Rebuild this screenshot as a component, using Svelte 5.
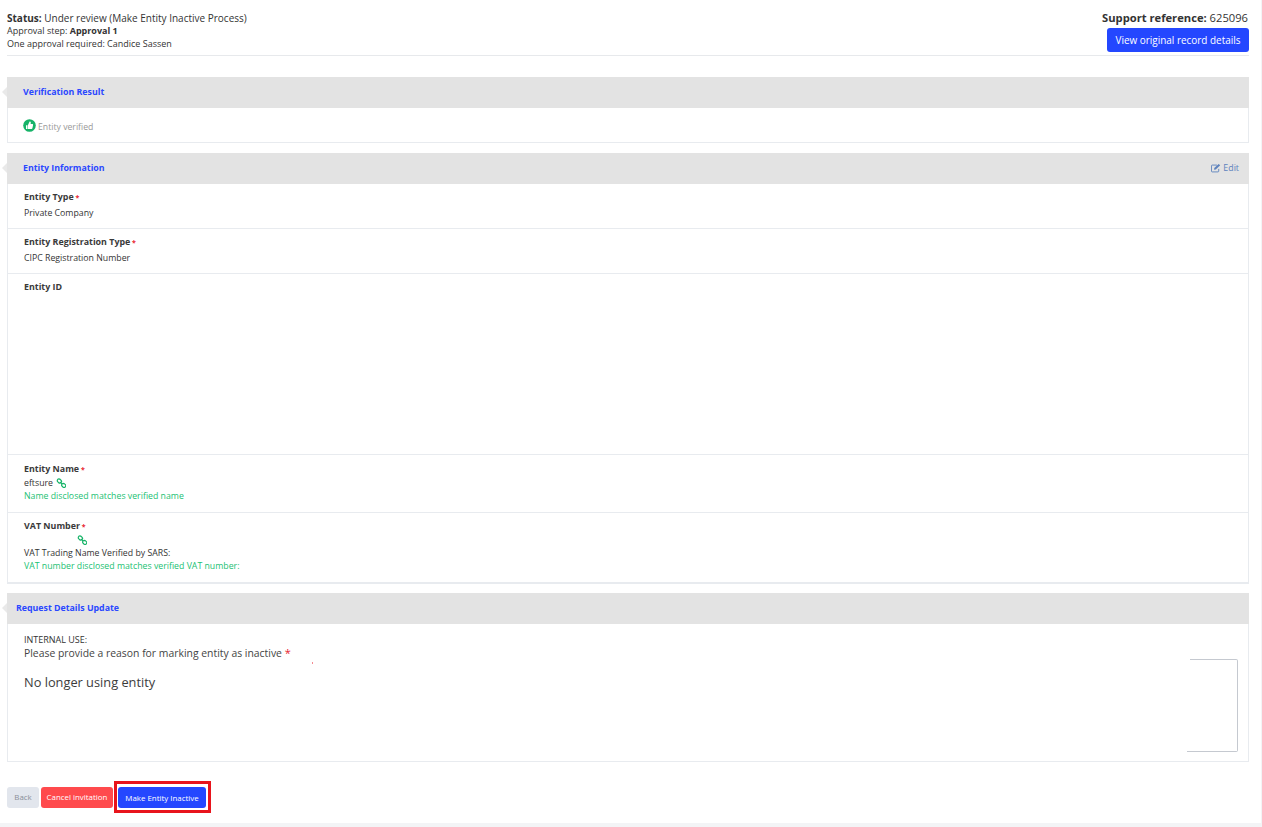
<script>
  const chain = 'M2.800 .9a1.900 1.900 0 0 1 1.500 .6l.8 .8a1.700 1.700 0 0 1 -2.400 2.400l-.8-.8A1.700 1.700 0 0 1 2.800 .9zM7.200 5.300a1.900 1.900 0 0 1 1.400 .6l.7 .7a1.700 1.700 0 0 1 -2.400 2.400l-.7-.7A1.700 1.700 0 0 1 7.200 5.300zM3.900 3.900l2.200 2.200';
</script>

<div class="page">
  <header class="top">
    <div class="status">
      <p class="s1"><b>Status:</b> Under review (Make Entity Inactive Process)</p>
      <p>Approval step: <b>Approval 1</b></p>
      <p>One approval required: Candice Sassen</p>
    </div>
    <div class="support">
      <p class="ref"><b>Support reference:</b> 625096</p>
      <button class="btn-view">View original record details</button>
    </div>
  </header>

  <section class="panel first">
    <h2 class="head"><span>Verification Result</span></h2>
    <div class="body verify">
      <svg class="thumb" width="13" height="13" viewBox="0 0 13 13" aria-hidden="true">
        <circle cx="6.500" cy="6.500" r="6.300" fill="#16b368"/>
        <path d="M3 6.200h1.500v3.800H3zM5 6.100 6.600 2.600c1 0 1.400 .7 1.200 1.500l-.2 1h1.700c.6 0 .9 .5 .8 1l-.7 3.200c-.1 .4-.4 .7-.8 .7H5z" fill="#fff"/>
      </svg>
      <span>Entity verified</span>
    </div>
  </section>

  <section class="panel second">
    <h2 class="head">
      <span>Entity Information</span>
      <a class="edit">
        <svg width="10" height="10" viewBox="0 0 11 10" aria-hidden="true">
          <path d="M8.500 6v2.500c0 .5-.3 .8-.8 .8H1.300c-.5 0-.8-.3-.8-.8V2.600c0-.5 .3-.8 .8-.8H6.500" fill="none" stroke="#5d82bd" stroke-width="1"/>
          <path d="M3.600 5 8.400 .6l1.700 1.500L5.300 6.700l-1.900 .3z" fill="#5d82bd"/>
        </svg>
        Edit
      </a>
    </h2>
    <div class="body rows">
      <div class="row r1">
        <div class="label">Entity Type <i>*</i></div>
        <div class="val">Private Company</div>
      </div>
      <div class="row r1">
        <div class="label">Entity Registration Type <i>*</i></div>
        <div class="val">CIPC Registration Number</div>
      </div>
      <div class="row r2">
        <div class="label">Entity ID</div>
      </div>
      <div class="row r3">
        <div class="label">Entity Name <i>*</i></div>
        <div class="val">eftsure
          <svg class="link" width="10" height="10" viewBox="0 0 10 10" aria-hidden="true">
            <path d={chain} fill="none" stroke="#16b368" stroke-width="1.200"/>
          </svg>
        </div>
        <div class="ok">Name disclosed matches verified name</div>
      </div>
      <div class="row r4">
        <div class="label">VAT Number <i>*</i></div>
        <div class="linkrow">
          <svg class="link" width="10" height="10" viewBox="0 0 10 10" aria-hidden="true">
            <path d={chain} fill="none" stroke="#16b368" stroke-width="1.200"/>
          </svg>
        </div>
        <div class="val">VAT Trading Name Verified by SARS:</div>
        <div class="ok">VAT number disclosed matches verified VAT number:</div>
      </div>
    </div>
  </section>

  <section class="panel third">
    <h2 class="head tight"><span>Request Details Update</span></h2>
    <div class="body request">
      <span class="tick"></span>
      <div class="internal">INTERNAL USE:</div>
      <div class="reason">Please provide a reason for marking entity as inactive <i>*</i></div>
      <div class="answer">
        <div class="answer-text">No longer using entity</div>
        <div class="answer-box"></div>
      </div>
    </div>
  </section>

  <footer class="actions">
    <button class="btn back">Back</button>
    <button class="btn cancel">Cancel invitation</button>
    <div class="mark"><button class="btn make">Make Entity Inactive</button></div>
  </footer>
</div>

<style>
  :global(body) {
    margin: 0;
    background: #f3f4f6;
    font-family: "Open Sans", "Liberation Sans", sans-serif;
    color: #333;
  }
  p { margin: 0; }
  .page {
    width: 1261px;
    height: 823px;
    box-sizing: border-box;
    background: #fff;
    padding: 0 12px 0 7px;
    overflow: hidden;
  }
  .top {
    height: 56px;
    box-sizing: border-box;
    border-bottom: 1px solid #e7e9ec;
    display: flex;
    justify-content: space-between;
    padding-top: 12px;
  }
  .status { font-size: 9px; line-height: 12.500px; color: #333; }
  .status .s1 { font-size: 10px; line-height: 13px; }
  .support { text-align: right; margin-top: -1px; }
  .ref { font-size: 11.200px; line-height: 14px; margin-bottom: 3px; padding-right: 1px; }
  .btn-view {
    display: block;
    width: 142px;
    height: 24px;
    margin-left: auto;
    border: 0;
    border-radius: 3px;
    padding: 0;
    background: #2447ff;
    color: #fff;
    font: 500 9.950px "Open Sans", sans-serif;
  }
  .panel { position: relative; }
  .first { margin-top: 21px; }
  .second { margin-top: 10px; }
  .third { margin-top: 9px; }
  .head {
    position: relative;
    margin: 0;
    height: 31px;
    box-sizing: border-box;
    background: #e3e3e3;
    display: flex;
    align-items: center;
    justify-content: space-between;
    padding: 0 10px 2px 16px;
    font-size: 8.800px;
    font-weight: 700;
    color: #2a48ff;
  }
  .head.tight { padding-left: 9px; }
  .head::before {
    content: "";
    position: absolute;
    left: -5px;
    top: 10px;
    border-style: solid;
    border-width: 5px 5px 5px 0;
    border-color: transparent #e9e9e9 transparent transparent;
  }
  .edit {
    display: flex;
    align-items: center;
    gap: 2px;
    font-weight: 400;
    color: #5d82bd;
  }
  .body {
    border: 1px solid #e8ebef;
    border-top: 0;
    box-sizing: border-box;
  }
  .verify {
    height: 35px;
    display: flex;
    align-items: center;
    gap: 2px;
    padding: 3px 0 0 15px;
    font-size: 8.700px;
    color: #999;
  }
  .thumb { margin-top: -3px; }
  .rows { border-bottom-width: 2px; }
  .row {
    box-sizing: border-box;
    padding: 6px 16px 0;
    border-bottom: 1px solid #e8ebef;
    font-size: 8.750px;
    line-height: 13.500px;
    color: #333;
  }
  .row:last-child { border-bottom: 0; }
  .r1 { height: 45px; }
  .r1 .label { margin-bottom: 2px; }
  .r2 { height: 181px; }
  .r3 { height: 58px; padding-top: 7px; }
  .r4 { height: 69px; }
  .label { font-weight: 700; font-size: 8.900px; color: #3a3a3a; }
  .label i { color: #e8232f; font-style: normal; font-size: 7px; margin-left: -.5px; }
  .reason i { color: #e8232f; font-style: normal; font-size: 11px; }
  .link { vertical-align: -2px; margin-left: 1px; }
  .linkrow { height: 13px; padding-left: 52px; line-height: 13px; }
  .ok { color: #1bbf73; }
  .request { position: relative; height: 138px; padding: 9px 16px 0; }
  .tick {
    position: absolute;
    left: 304px;
    top: 38px;
    width: 1px;
    height: 2px;
    background: #f58a90;
  }
  .internal { font-size: 9px; line-height: 13px; color: #333; }
  .reason { font-size: 10.400px; line-height: 14px; color: #444; }
  .answer { display: flex; justify-content: space-between; align-items: flex-start; margin-top: -1px; }
  .answer-text { font-size: 12.800px; line-height: 18px; color: #3c3c3c; padding-top: 14px; }
  .answer-box {
    width: 48px;
    height: 93px;
    box-sizing: border-box;
    border: 1px solid #c5c9d0;
    border-left: 0;
    border-radius: 0 2px 2px 0;
    margin-right: -6px;
    position: relative;
  }
  .answer-box::after {
    content: "";
    position: absolute;
    left: -3px;
    bottom: -1px;
    width: 3px;
    height: 1px;
    background: #c5c9d0;
  }
  .actions {
    display: flex;
    align-items: center;
    margin-top: 19px;
    gap: 2px;
  }
  .btn {
    height: 21px;
    border: 0;
    border-radius: 3px;
    padding: 0;
    font: 500 7.900px "Open Sans", sans-serif;
    color: #fff;
  }
  .back { width: 32px; background: #e2e6ed; color: #8a8f98; }
  .cancel { width: 72px; background: #ff4a4d; }
  .mark {
    margin-left: -1px;
    border: 3px solid #e8141c;
    padding: 3px 2px 2px 1px;
    display: flex;
  }
  .make { width: 88px; background: #2447ff; }
</style>
